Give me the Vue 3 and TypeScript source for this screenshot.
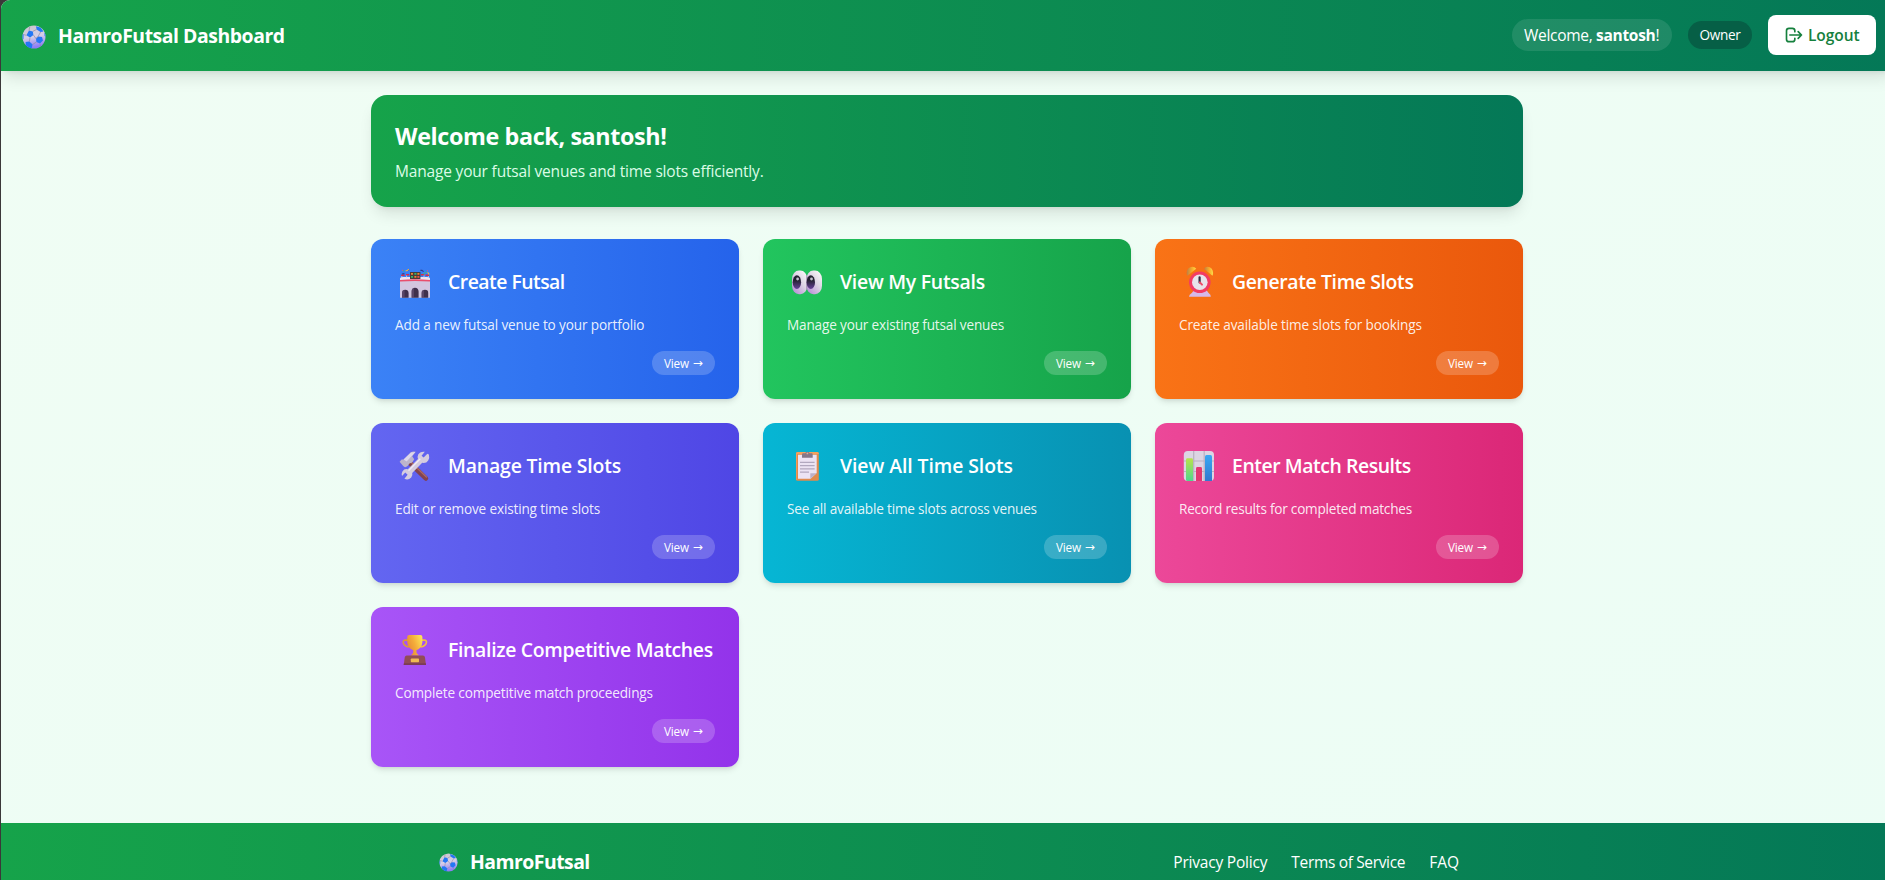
<script setup lang="ts">
import { ref } from 'vue'

interface ActionCard {
  id: string
  title: string
  description: string
}

const user = ref({ name: 'santosh', role: 'Owner' })

const cards: ActionCard[] = [
  { id: 'create', title: 'Create Futsal', description: 'Add a new futsal venue to your portfolio' },
  { id: 'venues', title: 'View My Futsals', description: 'Manage your existing futsal venues' },
  { id: 'generate', title: 'Generate Time Slots', description: 'Create available time slots for bookings' },
  { id: 'manage', title: 'Manage Time Slots', description: 'Edit or remove existing time slots' },
  { id: 'slots', title: 'View All Time Slots', description: 'See all available time slots across venues' },
  { id: 'results', title: 'Enter Match Results', description: 'Record results for completed matches' },
  { id: 'finalize', title: 'Finalize Competitive Matches', description: 'Complete competitive match proceedings' },
]
</script>

<template>
  <div class="window">
    <svg class="defs" width="0" height="0" aria-hidden="true">
      <defs>
        <linearGradient id="ballFill" x1="0" y1="0" x2="0.2" y2="1">
          <stop offset="0" stop-color="#c9c4cb" />
          <stop offset="0.55" stop-color="#d6cfe8" />
          <stop offset="1" stop-color="#8f7cf5" />
        </linearGradient>
        <clipPath id="ballClip"><circle cx="12" cy="12" r="11.5" /></clipPath>
        <symbol id="ball" viewBox="0 0 24 24">
          <circle cx="12" cy="12" r="11.5" fill="url(#ballFill)" />
          <g clip-path="url(#ballClip)">
            <path d="M7 5.5 10.8 6.4 11.4 10 8 12.6 4.4 10.3ZM16 11.6 20 12 21 15.6 18 18.6 14.4 17 14 13.6ZM14 1.2 18.6 2.6 21.5 6.4 18.6 7 14.6 4.4ZM3.6 17 7.4 16.6 10.6 19.6 9.6 23.4 4 23ZM0 8 1.6 9.6 1.5 14 0 15ZM22.4 8 24 8V12L22.6 11Z" fill="#2477f5" />
            <path d="M10.8 6.4 14.6 4.4M11.4 10 14 13.6M8 12.6 7.4 16.6M18.6 7 16 11.6 14 13.6M10.6 19.6 14.4 17M4.4 10.3 1.6 9.6M7 5.5 7.8 1.6M18 18.6 18.5 21" stroke="#918b9e" stroke-width="0.7" fill="none" />
          </g>
        </symbol>
      </defs>
    </svg>

    <div class="page">
      <header class="topbar">
        <div class="brand">
          <svg class="brand-ball"><use href="#ball" /></svg>
          <h1 class="brand-name">HamroFutsal Dashboard</h1>
        </div>
        <div class="account">
          <span class="greeting">Welcome, <strong>{{ user.name }}</strong>!</span>
          <span class="role">{{ user.role }}</span>
          <button class="logout" type="button">
            <svg class="logout-icon" viewBox="0 0 24 24" fill="none" stroke="currentColor" stroke-width="2" stroke-linecap="round" stroke-linejoin="round">
              <path d="M17 16l4-4m0 0l-4-4m4 4H7m6 4v1a3 3 0 01-3 3H6a3 3 0 01-3-3V7a3 3 0 013-3h4a3 3 0 013 3v1" />
            </svg>
            <span>Logout</span>
          </button>
        </div>
      </header>

      <main class="content">
        <section class="banner">
          <h2>Welcome back, {{ user.name }}!</h2>
          <p>Manage your futsal venues and time slots efficiently.</p>
        </section>

        <section class="grid">
          <article v-for="card in cards" :key="card.id" class="card" :class="card.id">
            <div class="card-head">
              <!-- Stadium -->
              <svg v-if="card.id === 'create'" class="emoji" viewBox="0 0 41 36">
                <path d="M5 16.5Q5 14.5 7 14.5H33Q35 14.5 35 16.5V34.8H5Z" fill="#d3c6df" />
                <path d="M5 16.2Q5 14 8 14H32Q35 14 35 16.2V17.6H5Z" fill="#eee4f1" />
                <path d="M5 17Q20 15.4 35 17V18.6Q20 17.2 5 18.6Z" fill="#e94e6c" />
                <path d="M7 34.8V30Q7 26.8 10.2 26.8T13.6 30V34.8ZM16.6 34.8V28.6Q16.6 24.8 20 24.8T23.6 28.6V34.8ZM26.6 34.8V30Q26.6 26.8 30 26.8T33.2 30V34.8Z" fill="#40304c" />
                <path d="M7 34.8V30Q7 27 9.6 27V34.8ZM16.6 34.8V28.6Q16.6 25 19 25V34.8ZM26.6 34.8V30Q26.6 27 29 27V34.8Z" fill="#6d587b" opacity=".55" />
                <path d="M6.2 11.4H9.6V13H6.2ZM11 11H14.2V12.6H11ZM26 11H29.2V12.6H26ZM30.6 11.4H34V13H30.6Z" fill="#dc2947" />
                <path d="M6.8 13V15M11.6 12.5V15M29 12.5V15M33.4 13V15M16 13V15.6M24 13V15.6" stroke="#d8d2eb" stroke-width=".8" />
                <rect x="15" y="9" width="10.4" height="7" fill="#493b3a" />
                <path d="M16 10h2v1.8h-2ZM22.4 10h2v1.8h-2ZM19.4 13h2v1.8h-2Z" fill="#f08432" />
                <path d="M19.4 10h2v1.8h-2ZM16 13h2v1.8h-2Z" fill="#36b66a" />
                <path d="M22.4 13h2v1.8h-2Z" fill="#ec514c" />
                <path d="M7 11 9.4 10.6M26.8 7.2 28.6 8.6M25.4 7.4H27M13.2 6.4 14 7.4" stroke="#343c86" stroke-width="1.1" />
                <path d="M10.6 8 12.6 7.2 13.8 6.2M32.6 9.4 34.2 11.4" stroke="#f3b642" stroke-width="1.1" fill="none" />
                <path d="M8 7.5 9.4 8.4M28 11 30.6 9.6 32 8.8" stroke="#39bd80" stroke-width="1" fill="none" />
                <path d="M32 7.2h1v1h-1ZM7 6.8h1v1H7Z" fill="#e5527a" />
              </svg>

              <!-- Eyes -->
              <svg v-else-if="card.id === 'venues'" class="emoji" viewBox="0 0 41 36">
                <defs>
                  <linearGradient id="eyeWhite" x1="1" y1="0" x2="0.2" y2="1">
                    <stop offset="0" stop-color="#fffefd" />
                    <stop offset=".5" stop-color="#ddd4e4" />
                    <stop offset="1" stop-color="#b98fd8" />
                  </linearGradient>
                  <linearGradient id="pupil" x1="0" y1="0" x2="0" y2="1">
                    <stop offset=".35" stop-color="#242130" />
                    <stop offset="1" stop-color="#68419a" />
                  </linearGradient>
                </defs>
                <rect x="5" y="7.6" width="15.3" height="23.6" rx="7" ry="8.5" fill="url(#eyeWhite)" />
                <rect x="19.4" y="7.6" width="15.6" height="23.6" rx="7" ry="8.5" fill="url(#eyeWhite)" />
                <path d="M19.8 12V27" stroke="#9b87a8" stroke-width=".9" />
                <ellipse cx="9.9" cy="19.2" rx="4.2" ry="6.9" fill="url(#pupil)" />
                <ellipse cx="23.8" cy="19.2" rx="4.2" ry="6.9" fill="url(#pupil)" />
                <circle cx="10.6" cy="16" r="1.4" fill="#c2c0cf" />
                <circle cx="24.5" cy="16" r="1.4" fill="#c2c0cf" />
              </svg>

              <!-- Alarm clock -->
              <svg v-else-if="card.id === 'generate'" class="emoji" viewBox="0 0 41 36">
                <defs>
                  <linearGradient id="bell" x1="0" y1="0" x2="1" y2="0">
                    <stop offset="0" stop-color="#bd7e42" />
                    <stop offset=".6" stop-color="#f9ae2b" />
                    <stop offset="1" stop-color="#fadc4d" />
                  </linearGradient>
                </defs>
                <path d="M8 12.3Q6.6 6.5 11.2 4.2 15 2.8 17.2 5.7L9.4 12Q8.6 12.8 8 12.3Z" fill="url(#bell)" />
                <path d="M33.8 12.3Q35 6.5 30.8 4.2 27 2.8 25 5.7L32.4 12Q33.2 12.8 33.8 12.3Z" fill="url(#bell)" />
                <path d="M10 33.8Q10 31.8 12.8 30L15.5 26.5H27L29.6 30Q32 31.8 31.8 33.8Z" fill="#d6bae9" />
                <circle cx="20.8" cy="19.3" r="10.8" fill="#f23c64" />
                <circle cx="20.8" cy="19.3" r="7.8" fill="#e8e4ec" />
                <path d="M20.6 14.4V19.4" stroke="#342c42" stroke-width="2.2" stroke-linecap="round" />
                <path d="M20.8 19.4 23 21.6" stroke="#ee4b69" stroke-width="2" stroke-linecap="round" />
              </svg>

              <!-- Hammer and wrench -->
              <svg v-else-if="card.id === 'manage'" class="emoji" viewBox="0 0 41 36">
                <path d="M14.5 15.5 30.8 31.4" stroke="#824350" stroke-width="4.8" stroke-linecap="round" />
                <path d="M15 14.2 31.4 30" stroke="#aa6864" stroke-width="1.4" stroke-linecap="round" />
                <path d="M4.6 14.8 6.6 12.6 8.6 12.4 15.8 5.3Q18 4.2 20.7 4.8L17.2 9.2 19.2 12.2 17.2 15.4 14.4 16.4 12.8 18.8Q10 21.4 8.2 19Z" fill="#bdb5cb" />
                <path d="M8.6 12.6 16 5.4 20.4 4.9 11.6 14.4Z" fill="#ded7eb" />
                <path d="M32.4 6.8 28.6 10.6 26.6 8.7 29.8 4.8Q25 4.2 23.2 7.6 22.2 9.8 23 12L12.8 22.2Q9.4 21.2 7.4 24.4 6.2 26.6 7 29L10.3 25.6 12.6 27.8 9.4 31.7Q13 33.8 16.2 30.6 18 28.4 17.2 26L27.2 15.8Q31.2 16.6 33.2 13.4 34.8 10.4 33.9 7.4Z" fill="#d5ccdf" />
                <path d="M13.6 23.6 25.3 11.8" stroke="#f2edf8" stroke-width="1.3" />
              </svg>

              <!-- Clipboard -->
              <svg v-else-if="card.id === 'slots'" class="emoji" viewBox="0 0 41 36">
                <rect x="9" y="5" width="22.8" height="28.8" rx="1.5" fill="#e18b4d" />
                <path d="M9 6.5Q9 5 10.5 5H30.3Q31.8 5 31.8 6.5V7H10V33H9.5Z" fill="#f6a15c" />
                <path d="M11 7.8H29.7V26L23.6 31.7H11Z" fill="#ece3f3" />
                <path d="M23.3 31.7V26.2H29.7Z" fill="#bdb0c8" />
                <path d="M15 10.7V7.4Q15 6.3 16.2 6.3H18.2Q18.4 4.7 20.4 4.7T22.6 6.3H24.6Q25.7 6.3 25.7 7.4V10.7Z" fill="#857789" />
                <circle cx="20.4" cy="6.4" r=".9" fill="#e2b08f" />
                <path d="M13 15.3H27.6M13 18.6H27.6M13 21.8H27.6M13 25.1H22" stroke="#b2a8bf" stroke-width="1.3" />
              </svg>

              <!-- Bar chart -->
              <svg v-else-if="card.id === 'results'" class="emoji" viewBox="0 0 41 36">
                <defs>
                  <linearGradient id="barGreen" x1="0" y1="0" x2="0" y2="1">
                    <stop offset="0" stop-color="#b9e34c" />
                    <stop offset="1" stop-color="#4fd78d" />
                  </linearGradient>
                  <linearGradient id="barBlue" x1="0" y1="0" x2="0" y2="1">
                    <stop offset="0" stop-color="#39a8f4" />
                    <stop offset="1" stop-color="#3179cf" />
                  </linearGradient>
                </defs>
                <rect x="4.8" y="4" width="30.2" height="30" rx="4" fill="#dcd5e3" />
                <path d="M14.7 4V34M25.2 4V34M5 14H35M5 24.5H35" stroke="#b9b0c1" stroke-width="1.2" />
                <path d="M7 12.7Q7 11.3 8.5 11.3H12.5Q14 11.3 14 12.7V34H8.5Q7 34 7 32.5Z" fill="url(#barGreen)" />
                <path d="M17 21.4Q17 20 18.5 20H21.5Q23 20 23 21.4V34H17Z" fill="#e33771" />
                <path d="M26 9.5Q26 8 27.5 8H31.5Q33 8 33 9.5V34H26Z" fill="url(#barBlue)" />
              </svg>

              <!-- Trophy -->
              <svg v-else class="emoji" viewBox="0 0 41 36">
                <defs>
                  <linearGradient id="cup" x1="0" y1="0.7" x2="1" y2="0.2">
                    <stop offset="0" stop-color="#e58635" />
                    <stop offset=".5" stop-color="#f4ac3a" />
                    <stop offset="1" stop-color="#fde458" />
                  </linearGradient>
                </defs>
                <path d="M13.5 9.2H10.2Q8 9.2 8.2 11.4 8.8 15.2 14.2 16" fill="none" stroke="#d99a3d" stroke-width="1.7" />
                <path d="M26 9.2H29.4Q31.6 9.2 31.4 11.4 30.8 15.2 25.4 16" fill="none" stroke="#f2bd42" stroke-width="1.7" />
                <path d="M12.2 6Q12.2 4.1 14.2 4.1H25.4Q27.4 4.1 27.4 6V11Q26.9 17.2 21.4 19.3L21.6 22 24 24.5H15.7L18.1 22 18.3 19.3Q12.7 17.2 12.2 11Z" fill="url(#cup)" />
                <path d="M11.7 24.5H28Q29.5 24.5 29.9 26.1L31 34H8.7L9.8 26.1Q10.2 24.5 11.7 24.5Z" fill="#914c56" />
                <path d="M9 32.3H30.8L31 34H8.7Z" fill="#7b3b57" />
                <rect x="15.8" y="27.5" width="8.2" height="3.7" rx=".7" fill="#efbb53" />
              </svg>

              <h3>{{ card.title }}</h3>
            </div>
            <p class="card-text">{{ card.description }}</p>
            <div class="card-foot"><span class="view">View <span class="arrow">→</span></span></div>
          </article>
        </section>
      </main>

      <footer class="footer">
        <div class="footer-inner">
          <div class="footer-brand">
            <svg class="footer-ball"><use href="#ball" /></svg>
            <span>HamroFutsal</span>
          </div>
          <nav class="links">
            <a class="privacy">Privacy Policy</a>
            <a class="terms">Terms of Service</a>
            <a>FAQ</a>
          </nav>
        </div>
      </footer>
    </div>
  </div>
</template>

<style>
body {
  margin: 0;
  overflow: hidden;
  background: #3b3839;
}
</style>

<style scoped>
.window {
  height: 880px;
  padding-left: 1px;
  overflow: hidden;
  box-sizing: border-box;
  color: #fff;
  font-family: "Open Sans", "Noto Sans", sans-serif;
}
.defs {
  position: absolute;
}
.page {
  width: 1892px;
  height: 900px;
  border-top-left-radius: 9px;
  overflow: hidden;
  background: linear-gradient(to bottom right, #f0fdf4, #ecfdf5);
}
h1, h2, h3, p {
  margin: 0;
}

.topbar {
  position: relative;
  display: flex;
  align-items: center;
  justify-content: space-between;
  box-sizing: border-box;
  height: 71px;
  padding: 0 17px 1px 16px;
  background: linear-gradient(to right, #16a34a, #047857);
  box-shadow: 0 10px 15px -3px rgba(0, 0, 0, 0.1), 0 4px 6px -4px rgba(0, 0, 0, 0.1);
}
.brand {
  display: flex;
  align-items: center;
}
.brand-ball {
  width: 24px;
  height: 24px;
  margin: 3px 12px 0 5px;
}
.brand-name {
  padding-top: 2px;
  font-size: 19.4px;
  line-height: 28px;
  font-weight: 700;
  letter-spacing: -0.45px;
}
.account {
  display: flex;
  align-items: center;
  gap: 16px;
}
.greeting {
  box-sizing: border-box;
  width: 160px;
  padding: 4px 12px;
  border-radius: 16px;
  background: rgba(255, 255, 255, 0.1);
  font-size: 15.5px;
  line-height: 24px;
  letter-spacing: -0.3px;
  white-space: nowrap;
}
.greeting strong {
  font-weight: 700;
}
.role {
  box-sizing: border-box;
  width: 64px;
  padding: 4px 0;
  border-radius: 14px;
  background: #065f46;
  font-size: 13.6px;
  line-height: 20px;
  letter-spacing: -0.35px;
  text-align: center;
}
.logout {
  display: flex;
  align-items: center;
  gap: 4px;
  box-sizing: border-box;
  width: 108px;
  height: 40px;
  padding: 0 16px;
  border: 0;
  border-radius: 8px;
  background: #fff;
  color: #15803d;
  font: 600 15.5px/24px "Open Sans", "Noto Sans", sans-serif;
  letter-spacing: -0.06px;
}
.logout-icon {
  width: 20px;
  height: 20px;
  flex: none;
}

.content {
  width: 1152px;
  margin: 0 auto;
  padding: 24px 0 56px;
}
.banner {
  padding: 25px 24px 24px;
  margin-bottom: 32px;
  border-radius: 16px;
  background: linear-gradient(to right, #16a34a, #047857);
  box-shadow: 0 10px 15px -3px rgba(0, 0, 0, 0.1), 0 4px 6px -4px rgba(0, 0, 0, 0.1);
}
.banner h2 {
  margin-bottom: 7px;
  font-size: 23.3px;
  line-height: 32px;
  font-weight: 700;
  letter-spacing: -0.36px;
}
.banner p {
  color: #dcfce7;
  font-size: 15.5px;
  line-height: 24px;
  letter-spacing: -0.18px;
}

.grid {
  display: grid;
  grid-template-columns: repeat(3, 368px);
  gap: 24px;
}
.card {
  box-sizing: border-box;
  height: 160px;
  padding: 24px;
  border-radius: 12px;
  box-shadow: 0 4px 6px -1px rgba(0, 0, 0, 0.1), 0 2px 4px -2px rgba(0, 0, 0, 0.1);
}
.card-head {
  display: flex;
  align-items: center;
  margin-bottom: 16px;
}
.emoji {
  width: 41px;
  height: 36px;
  margin-right: 12px;
  flex: none;
}
.card h3 {
  padding-top: 2px;
  font-size: 19.4px;
  line-height: 28px;
  font-weight: 600;
  white-space: nowrap;
}
.card-text {
  font-size: 13.6px;
  line-height: 20px;
  color: rgba(255, 255, 255, 0.9);
}
.card-foot {
  display: flex;
  justify-content: flex-end;
  margin-top: 16px;
}
.view {
  display: flex;
  gap: 4px;
  box-sizing: border-box;
  width: 63px;
  height: 24px;
  padding: 4px 0 4px 12px;
  border-radius: 12px;
  background: rgba(255, 255, 255, 0.2);
  font-size: 11.7px;
  line-height: 16px;
  letter-spacing: -0.2px;
  white-space: nowrap;
}
.arrow {
  font-family: "DejaVu Sans", sans-serif;
  font-size: 12px;
}

.create { background: linear-gradient(to right, #3b82f6, #2563eb); }
.venues { background: linear-gradient(to right, #22c55e, #16a34a); }
.generate { background: linear-gradient(to right, #f97316, #ea580c); }
.manage { background: linear-gradient(to right, #6366f1, #4f46e5); }
.slots { background: linear-gradient(to right, #06b6d4, #0891b2); }
.results { background: linear-gradient(to right, #ec4899, #db2777); }
.finalize { background: linear-gradient(to right, #a855f7, #9333ea); }

.create h3 { letter-spacing: -0.51px; }
.venues h3 { letter-spacing: -0.25px; }
.generate h3 { letter-spacing: -0.36px; }
.manage h3 { letter-spacing: -0.16px; }
.slots h3 { letter-spacing: -0.07px; }
.results h3 { letter-spacing: -0.43px; }
.finalize h3 { letter-spacing: -0.31px; }

.create .card-text { letter-spacing: -0.13px; }
.venues .card-text { letter-spacing: -0.17px; }
.generate .card-text { letter-spacing: -0.15px; }
.manage .card-text { letter-spacing: -0.16px; }
.slots .card-text { letter-spacing: -0.19px; }
.results .card-text { letter-spacing: -0.23px; }
.finalize .card-text { letter-spacing: -0.15px; }

.footer {
  height: 120px;
  padding-top: 24px;
  box-sizing: border-box;
  background: linear-gradient(to right, #16a34a, #047857);
}
.footer-inner {
  display: flex;
  align-items: center;
  justify-content: space-between;
  width: 1024px;
  margin: 0 auto;
}
.footer-brand {
  display: flex;
  align-items: center;
  padding-top: 1px;
  font-size: 19.4px;
  line-height: 28px;
  font-weight: 700;
  letter-spacing: -0.52px;
}
.footer-ball {
  width: 19px;
  height: 19px;
  margin: 1px 12px 0 4px;
}
.links {
  display: flex;
  gap: 24px;
  font-size: 15.5px;
  line-height: 24px;
}
.privacy { letter-spacing: -0.2px; }
.terms { letter-spacing: -0.34px; }
</style>
